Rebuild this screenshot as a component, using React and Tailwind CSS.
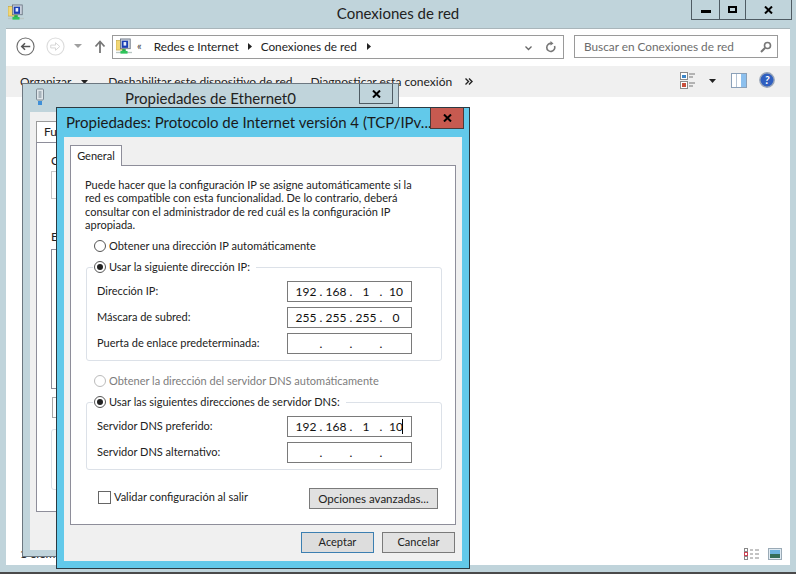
const FONT = "font-['Lato',sans-serif]"

function NetIcon({ className }) {
  return (
    <svg viewBox="0 0 18 18" className={className}>
      <rect x="0" y="2" width="9" height="11" fill="#f2d774" stroke="#b89a3a" strokeWidth="0.6" />
      <rect x="5" y="0.5" width="11" height="11" fill="#c9d0dc" stroke="#66707e" strokeWidth="0.9" />
      <rect x="6.5" y="2.5" width="7" height="8" fill="#1a3fb4" />
      <rect x="8.5" y="4" width="3" height="4" fill="#e8eefc" />
      <rect x="7" y="12" width="4" height="2.5" fill="#2aa84a" />
      <rect x="0" y="15" width="18" height="1.5" fill="#b9c6c4" />
      <rect x="5" y="14" width="8" height="3" fill="#2ec45a" />
    </svg>
  )
}

function CloseGlyph() {
  return (
    <svg width="9" height="8" viewBox="0 0 9 8"><path d="M1 0.5 L8 7.5 M8 0.5 L1 7.5" stroke="#000" strokeWidth="2" /></svg>
  )
}

function Octets({ values = ['', '', '', ''], caret }) {
  return (
    <div className="w-[125px] h-[21px] border border-[#7a7a7a] bg-white flex items-center pl-[5px] text-[12px] text-[#111] relative">
      {values.map((v, i) => (
        <div key={i} className="flex items-center">
          <span className="w-[26px] text-center">{v}</span>
          {i < 3 && <span className="w-[4px] text-center">.</span>}
        </div>
      ))}
      {caret && <span className="absolute left-[114px] top-[2px] h-[15px] w-px bg-black" />}
    </div>
  )
}

function Row({ label, values, caret }) {
  return (
    <div className="flex items-center justify-between pl-[10px] pr-[29px] h-[21px] text-[11px] text-[#222]">
      <span>{label}</span>
      <Octets values={values} caret={caret} />
    </div>
  )
}

function Radio({ checked, disabled, label }) {
  return (
    <div className={`flex items-center gap-[3px] h-[14px] text-[11px] ${disabled ? 'text-[#7d7d7d]' : 'text-[#222]'}`}>
      <span className={`w-[12px] h-[12px] rounded-full border bg-white flex items-center justify-center ${disabled ? 'border-[#bbb]' : 'border-[#555]'}`}>
        {checked && <span className="w-[6px] h-[6px] rounded-full bg-[#222]" />}
      </span>
      <span>{label}</span>
    </div>
  )
}

function Group({ height, children }) {
  return (
    <div className={`ml-[15px] w-[356px] border border-[#dce1e8] rounded-[3px] ${height} relative`}>
      <div className="absolute left-[6px] top-[-8px] bg-white pl-[1px] pr-[6px]">{children[0]}</div>
      <div className="flex flex-col gap-[5px] pt-[13px]">{children[1]}</div>
    </div>
  )
}

export default function App() {
  return (
    <div className={`${FONT} relative w-[796px] h-[574px] overflow-hidden bg-[#c0d4db]`}>
      {/* Main window */}
      <div className="h-[572px] flex flex-col">
        <div className="h-[28px] pb-[2px] relative flex items-center justify-center text-[15px] text-[#222] shrink-0">
          <NetIcon className="absolute left-[8px] top-[4px] w-[16px] h-[17px]" />
          <span>Conexiones de red</span>
          <div className="absolute right-[4px] top-0 h-[20px] flex border border-t-0 border-[#4f5b63] text-black">
            <div className="w-[28px] flex items-center justify-center border-r border-[#4f5b63]"><span className="w-[10px] h-[3px] bg-black mt-[3px]" /></div>
            <div className="w-[26px] flex items-center justify-center border-r border-[#4f5b63]"><span className="w-[9px] h-[7px] border-2 border-black" /></div>
            <div className="w-[45px] flex items-center justify-center"><CloseGlyph /></div>
          </div>
        </div>
        <div className="mx-[6px] h-[537px] bg-white border-t border-[#a9b5ba] flex flex-col">
          {/* Address bar */}
          <div className="h-[37px] pb-[2px] flex items-center relative shrink-0">
            <svg className="ml-[10px]" width="19" height="19" viewBox="0 0 20 20">
              <circle cx="10" cy="10" r="9" fill="#fff" stroke="#6f6f6f" strokeWidth="1.2" />
              <path d="M15 10 H6 M9.5 6.5 L6 10 L9.5 13.5" fill="none" stroke="#555" strokeWidth="1.6" />
            </svg>
            <svg className="ml-[11px]" width="19" height="19" viewBox="0 0 20 20">
              <circle cx="10" cy="10" r="9" fill="#fff" stroke="#dcdcdc" strokeWidth="1.2" />
              <path d="M5 8.5 H10 V6 L14.5 10 L10 14 V11.5 H5 Z" fill="none" stroke="#d5d5d5" />
            </svg>
            <svg className="ml-[9px]" width="8" height="5" viewBox="0 0 8 5"><path d="M0 0 H8 L4 4 Z" fill="#a0a0a0" /></svg>
            <svg className="ml-[12px]" width="12" height="14" viewBox="0 0 12 14"><path d="M6 13 V2 M1.5 6.5 L6 1.5 L10.5 6.5" fill="none" stroke="#777" strokeWidth="1.8" /></svg>
            <div className="ml-[6px] w-[452px] h-[24px] border border-[#9a9a9a] flex items-center relative text-[11.8px] text-[#222]">
              <NetIcon className="ml-[3px] w-[16px] h-[17px]" />
              <span className="ml-[5px] text-[11px] text-[#444]">«</span>
              <span className="ml-[12px]">Redes e Internet</span>
              <svg className="ml-[9px]" width="5" height="7" viewBox="0 0 5 7"><path d="M0 0 L4 3.5 L0 7 Z" fill="#222" /></svg>
              <span className="ml-[8px]">Conexiones de red</span>
              <svg className="ml-[10px]" width="5" height="7" viewBox="0 0 5 7"><path d="M0 0 L4 3.5 L0 7 Z" fill="#222" /></svg>
              <svg className="absolute right-[31px] top-[10px]" width="7" height="5" viewBox="0 0 7 5"><path d="M0.5 0.5 L3.5 3.5 L6.5 0.5" fill="none" stroke="#666" strokeWidth="1.3" /></svg>
              <svg className="absolute right-[7px] top-[5px]" width="11" height="12" viewBox="0 0 11 12"><path d="M9.5 5 A4 4 0 1 1 6.5 2.5" fill="none" stroke="#777" strokeWidth="1.6" /><path d="M5.5 0 L8.5 2.5 L5.5 4.5 Z" fill="#777" /></svg>
            </div>
            <div className="ml-[10px] w-[204px] h-[23px] border border-[#9a9a9a] flex items-center justify-between pl-[9px] pr-[5px] text-[11.8px] text-[#6d6d6d]">
              <span>Buscar en Conexiones de red</span>
              <svg width="12" height="12" viewBox="0 0 12 12"><circle cx="7.5" cy="4.5" r="3" fill="#fff" stroke="#777" strokeWidth="1.6" /><path d="M5 7 L1 11" stroke="#777" strokeWidth="2" /></svg>
            </div>
          </div>
          {/* Toolbar */}
          <div className="h-[31px] bg-[#f0f0f0] flex items-center relative text-[12px] text-[#222] shrink-0 pl-[14px]">
            <span>Organizar</span>
            <svg className="ml-[10px]" width="7" height="4" viewBox="0 0 7 4"><path d="M0 0 H7 L3.5 4 Z" fill="#222" /></svg>
            <span className="ml-[20px]">Deshabilitar este dispositivo de red</span>
            <span className="ml-[18px]">Diagnosticar esta conexión</span>
            <svg className="ml-[13px]" width="8" height="7" viewBox="0 0 8 7"><path d="M0.5 0.5 L3.5 3.5 L0.5 6.5 M4 0.5 L7 3.5 L4 6.5" fill="none" stroke="#222" strokeWidth="1.4" /></svg>
            <svg className="absolute left-[674px] top-[6px]" width="16" height="17" viewBox="0 0 16 17">
              <rect x="0.5" y="0.5" width="7" height="7" fill="#fff" stroke="#8a8a8a" /><rect x="2" y="3" width="4" height="3" fill="#3c86c8" />
              <rect x="0.5" y="9.5" width="7" height="7" fill="#fff" stroke="#8a8a8a" /><rect x="2" y="11" width="4" height="4" fill="#c9503c" />
              <path d="M9 2 H15 M9 5 H13 M9 11 H15 M9 14 H13" stroke="#777" />
            </svg>
            <svg className="absolute left-[703px] top-[13px]" width="7" height="4" viewBox="0 0 7 4"><path d="M0 0 H7 L3.5 4 Z" fill="#222" /></svg>
            <svg className="absolute left-[725px] top-[7px]" width="16" height="15" viewBox="0 0 16 15">
              <rect x="0.5" y="0.5" width="15" height="14" fill="#fff" stroke="#8aa0b8" /><rect x="10" y="1" width="5" height="13" fill="#8cc0ee" /><path d="M5.5 1 V14" stroke="#b5c4d4" />
            </svg>
            <svg className="absolute left-[753px] top-[6px]" width="16" height="16" viewBox="0 0 16 16">
              <circle cx="8" cy="8" r="7.2" fill="#2f5fc0" stroke="#9aa6b8" strokeWidth="1.4" />
              <text x="8" y="12" textAnchor="middle" fontSize="11" fontWeight="700" fontStyle="italic" fill="#fff">?</text>
            </svg>
          </div>
          {/* Status bar */}
          <div className="flex-1 flex items-end pb-[5px] pl-[14px] pr-[8px] gap-[8px] text-[12px] text-[#222]">
            <span className="mr-auto leading-[12px]">1 elemento</span>
            <svg width="16" height="12" viewBox="0 0 16 12">
              <rect x="0.5" y="0.5" width="3" height="3" fill="#fff" stroke="#888" /><rect x="0.5" y="4.5" width="3" height="3" fill="#fff" stroke="#c45" /><rect x="0.5" y="8.5" width="3" height="3" fill="#fff" stroke="#888" />
              <path d="M6 2 H9 M11 2 H15 M6 6 H9 M11 6 H15 M6 10 H9 M11 10 H15" stroke="#888" />
            </svg>
            <svg width="14" height="12" viewBox="0 0 14 12">
              <rect x="0.5" y="0.5" width="13" height="11" fill="#dfeaf2" stroke="#9aaab6" /><rect x="2" y="2" width="10" height="4" fill="#6db4e0" /><rect x="2" y="6" width="10" height="4" fill="#356f5a" />
            </svg>
          </div>
        </div>
      </div>
      <div className="h-[2px] bg-[#4a4a4a]" />

      {/* Propiedades de Ethernet0 window */}
      <div className="absolute left-[22px] top-[83px] w-[377px] h-[474px] border border-[#6c7780] bg-[#c0d4db]">
        <div className="h-[28px] relative flex items-center justify-center text-[15px] text-[#222]">
          <svg className="absolute left-[12px] top-[4px]" width="10" height="18" viewBox="0 0 10 18">
            <rect x="1.5" y="1" width="7" height="11" rx="1" fill="#dfe6ea" stroke="#7d8a94" /><rect x="3.5" y="3" width="3" height="7" fill="#a8b4bc" /><rect x="3" y="13" width="4" height="4" fill="#3f8fd8" />
          </svg>
          <span>Propiedades de Ethernet0</span>
          <div className="absolute right-[5px] top-0 w-[34px] h-[20px] border border-t-0 border-[#4f5b63] flex items-center justify-center"><CloseGlyph /></div>
        </div>
        <div className="mx-[7px] h-[438px] bg-[#f0f0f0] pt-[9px] pl-[6px]">
          <div className="w-[60px] h-[21px] bg-white border border-b-0 border-[#9a9a9a] pl-[7px] text-[12px] text-[#222] leading-[20px]">Fu</div>
          <div className="w-[340px] h-[370px] bg-white border border-[#8e8e9a] pl-[14px] text-[12px] text-[#222]">
            <div className="pt-[9px] h-[28px]">C</div>
            <div className="w-[30px] h-[28px] border border-[#c8c8c8]" />
            <div className="mt-[29px] h-[16px]">E</div>
            <div className="mt-[5px] w-[30px] h-[140px] border border-[#8e8e9a]" />
            <div className="mt-[8px] w-[30px] h-[21px] border border-[#a8a8a8] ml-px" />
            <div className="mt-[11px] w-[30px] h-[61px] border border-[#dce1e8] rounded-[3px]" />
          </div>
        </div>
      </div>

      {/* Propiedades: Protocolo de Internet window */}
      <div className="absolute left-[56px] top-[107px] w-[414px] h-[462px] border border-[#2b3a42] bg-[#62c9ea] px-[7px]">
        <div className="h-[29px] relative flex items-center text-[15px] text-[#1a1a1a] pl-[2px]">
          <span>Propiedades: Protocolo de Internet versión 4 (TCP/IPv...</span>
          <div className="absolute right-[-2px] top-0 w-[34px] h-[21px] bg-[#c75a50] border border-t-0 border-[#4a3a3a] flex items-center justify-center"><CloseGlyph /></div>
        </div>
        <div className="h-[424px] bg-[#f0f0f0] pt-[8px] px-[6px]">
          <div className="w-[52px] h-[21px] bg-white border border-b-0 border-[#8e8e9a] text-center text-[11px] leading-[20px] text-[#222] relative z-10 mb-[-1px]">General</div>
          <div className="h-[360px] bg-white border border-[#8e8e9a] pt-[12px] text-[11px] text-[#222]">
            <p className="ml-[14px] w-[345px] leading-[13.3px]">
              Puede hacer que la configuración IP se asigne automáticamente si la<br />
              red es compatible con esta funcionalidad. De lo contrario, deberá<br />
              consultar con el administrador de red cuál es la configuración IP<br />
              apropiada.
            </p>
            <div className="ml-[23px] mt-[8px]"><Radio label="Obtener una dirección IP automáticamente" /></div>
            <div className="mt-[14px]">
              <Group height="h-[94px]">
                <Radio checked label="Usar la siguiente dirección IP:" />
                <>
                  <Row label="Dirección IP:" values={['192', '168', '1', '10']} />
                  <Row label="Máscara de subred:" values={['255', '255', '255', '0']} />
                  <Row label="Puerta de enlace predeterminada:" />
                </>
              </Group>
            </div>
            <div className="ml-[23px] mt-[13px]"><Radio disabled label="Obtener la dirección del servidor DNS automáticamente" /></div>
            <div className="mt-[14px]">
              <Group height="h-[68px]">
                <Radio checked label="Usar las siguientes direcciones de servidor DNS:" />
                <>
                  <Row label="Servidor DNS preferido:" values={['192', '168', '1', '10']} caret />
                  <Row label="Servidor DNS alternativo:" />
                </>
              </Group>
            </div>
            <div className="flex items-center mt-[18px] ml-[27px] pr-[17px]">
              <div className="flex items-center mb-[2px]">
                <span className="w-[13px] h-[13px] border border-[#666] bg-white" />
                <span className="ml-[3px]">Validar configuración al salir</span>
              </div>
              <button className="ml-auto w-[129px] h-[21px] border border-[#7a7a7a] bg-[#e1e1e1] text-[11.5px] text-[#222]">Opciones avanzadas...</button>
            </div>
          </div>
          <div className="flex justify-end gap-[8px] mt-[7px] pr-px">
            <button className="w-[73px] h-[21px] border border-[#3c7fb1] bg-[#dddddd] text-[11px] text-[#222]">Aceptar</button>
            <button className="w-[73px] h-[21px] border border-[#7a7a7a] bg-[#e1e1e1] text-[11px] text-[#222]">Cancelar</button>
          </div>
        </div>
      </div>
    </div>
  )
}
